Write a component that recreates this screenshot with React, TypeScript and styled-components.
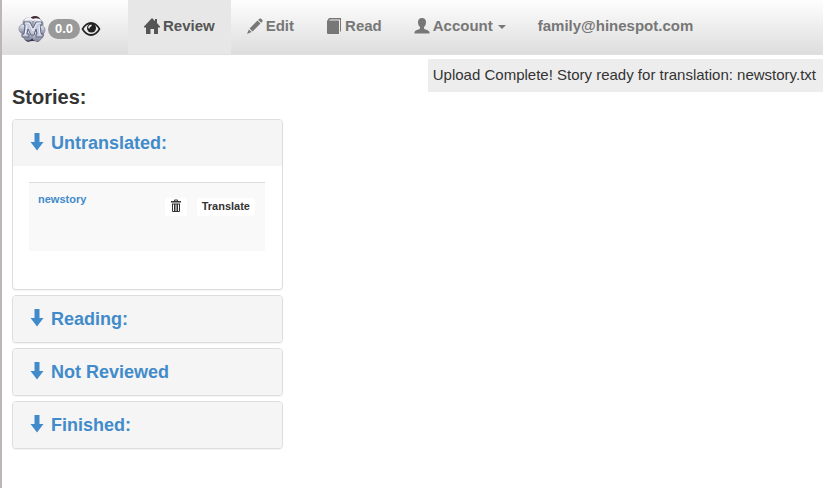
import React from 'react';
import styled, { createGlobalStyle } from 'styled-components';

const GlobalStyle = createGlobalStyle`
  *, *::before, *::after { box-sizing: border-box; }
  html, body, #root { min-height: 100vh; }
  body {
    margin: 0;
    color: #333;
    background: #fff;
    font-family: "Liberation Sans", Arial, Helvetica, sans-serif;
    font-size: 15px;
    line-height: 20px;
  }
`;

const Page = styled.div`
  min-height: 100vh;
  border-left: 2px solid #bdb6b6;
`;

const Navbar = styled.nav`
  display: flex;
  align-items: stretch;
  height: 55px;
  background: linear-gradient(to bottom, #fefefe 0%, #dddddd 100%);
  border-bottom: 1px solid #e0e0e0;
`;

const Brand = styled.a`
  display: flex;
  align-items: center;
  width: 126px;
  padding: 4px 0 0 16px;
  gap: 1px;
  color: #222;
  text-decoration: none;
`;

const Badge = styled.span`
  height: 20px;
  padding: 0 7px;
  border-radius: 10px;
  background: #999;
  color: #fff;
  font-size: 13px;
  font-weight: bold;
`;

const NavList = styled.ul`
  display: flex;
  margin: 0;
  padding: 0;
  list-style: none;
`;

const NavLink = styled.a<{ $active?: boolean }>`
  display: flex;
  align-items: center;
  height: 54px;
  padding: 0 16px 3px;
  gap: 3px;
  color: ${(p) => (p.$active ? '#555' : '#777')};
  background: ${(p) => (p.$active ? '#e7e7e7' : 'transparent')};
  font-weight: bold;
  text-decoration: none;
  white-space: nowrap;
`;

const Caret = styled.span`
  margin: 3px 0 0 2px;
  border-top: 4px solid currentColor;
  border-left: 4px solid transparent;
  border-right: 4px solid transparent;
`;

const Toast = styled.div`
  position: absolute;
  top: 59px;
  right: 0;
  padding: 6px 7px 7px 5px;
  background: #ededed;
`;

const Main = styled.main`
  padding: 30px 10px;
`;

const Sidebar = styled.section`
  width: 33%;
  min-width: 271px;
`;

const Title = styled.h1`
  margin: 0 0 10px;
  font-size: 20px;
  line-height: 24px;
`;

const PanelGroup = styled.div`
  display: flex;
  flex-direction: column;
  gap: 5px;
`;

const Panel = styled.section`
  border: 1px solid #ddd;
  border-radius: 4px;
  background: #fff;
  box-shadow: 0 1px 1px rgba(0, 0, 0, 0.05);
  overflow: hidden;
`;

const PanelHeading = styled.h2`
  margin: 0;
  padding: 13px 16px;
  background: #f5f5f5;
  font-size: 18px;
  line-height: 20px;
`;

const PanelLink = styled.a`
  display: flex;
  align-items: center;
  gap: 6px;
  color: #428bca;
  text-decoration: none;
`;

const PanelBody = styled.div`
  padding: 16px 17px 38px 16px;
`;

const StoryTable = styled.table`
  width: 100%;
  border-collapse: collapse;
  font-size: 11px;
  font-weight: bold;
  line-height: 16px;
`;

const StoryCell = styled.td`
  height: 68px;
  padding: 8px 9px;
  border-top: 1px solid #ddd;
  background: #f9f9f9;
  vertical-align: top;
`;

const StoryLink = styled.a`
  color: #428bca;
  text-decoration: none;
`;

const Actions = styled.div`
  display: flex;
  justify-content: flex-end;
  gap: 10px;
  padding: 7px 1px 0 0;
`;

const Button = styled.button`
  display: flex;
  align-items: center;
  height: 18px;
  padding: 0 5px 2px;
  border: 0;
  border-radius: 3px;
  background: #fff;
  color: #333;
  font: inherit;
  cursor: pointer;
`;

const Icon = styled.svg`
  display: block;
  flex: none;
  fill: currentColor;
`;

const Logo = () => (
  <Icon width="29" height="28" viewBox="0 0 29 28" aria-label="Home">
    <defs>
      <linearGradient id="metal" x1="0" y1="0" x2="0" y2="1">
        <stop offset="0" stopColor="#f4f5fa" />
        <stop offset="0.5" stopColor="#b4b9c9" />
        <stop offset="1" stopColor="#7c8099" />
      </linearGradient>
    </defs>
    <ellipse cx="17" cy="4" rx="5" ry="3" fill="#402936" />
    <path d="M4 18Q5 25 10 27Q15 25 20 27Q25 24 26 18Z" fill="#38364e" />
    <g fill="url(#metal)" stroke="#9698ab" strokeWidth="1">
      <circle cx="10" cy="8" r="5" />
      <circle cx="20" cy="9" r="5" />
      <circle cx="6" cy="14" r="5" />
      <circle cx="22" cy="15" r="5" />
      <circle cx="10" cy="20" r="5" />
      <circle cx="19" cy="21" r="5" />
    </g>
    <path d="M7 5Q11 2 15 5Q20 3 23 7" fill="none" stroke="#f5f5fa" strokeWidth="2" />
    <path
      d="M6 7H12L15 13L18 7H24V10H22L23 19H25V22H18V19H19L18 14L16 20H13L10 14L9 19H11V22H4V19H6L7 10H6Z"
      fill="#c3c9da"
      stroke="#61657f"
      strokeWidth="1"
    />
    <path d="M7 8H11L15 16L19 8H23M9 10L7 20M21 10L22 20" fill="none" stroke="#eef1f9" strokeWidth="1" />
  </Icon>
);

const EyeIcon = () => (
  <Icon width="20" height="16" viewBox="0 0 20 16">
    <path
      fillRule="evenodd"
      d="M.5 8Q4.500 1 10 1Q15.500 1 19.500 8Q15.500 15 10 15Q4.500 15 .5 8ZM2.500 8Q5.500 13 10 13Q14.500 13 17.500 8Q14.500 3 10 3Q5.500 3 2.500 8Z"
    />
    <circle cx="10.500" cy="7" r="4.500" />
    <path d="M10.300 3.500Q11.500 4.500 10 5.500Q8.500 6 8.300 7.800Q6.700 7.500 7.200 5.800Q8 3.800 10.300 3.500Z" fill="#eee" />
  </Icon>
);

const HomeIcon = () => (
  <Icon width="16" height="16" viewBox="0 0 16 16">
    <path d="M8 0L11 3V1H13V5L16 8.500V9.500H14V16H10V11H6.500V16H2V9.500H0V8.500Z" />
  </Icon>
);

const PencilIcon = () => (
  <Icon width="16" height="16" viewBox="0 0 16 16">
    <path d="M12.300 .8Q13.200 0 14.100 .8L15.300 2Q16 2.800 15.300 3.700L14.200 4.800L11.200 1.900ZM10.500 2.600L13.500 5.500L5.500 13.400L2.600 10.500ZM1.900 11.400L4.600 14.100L0 16Z" />
  </Icon>
);

const BookIcon = () => (
  <Icon width="16" height="16" viewBox="0 0 16 16">
    <path d="M1 3L3 0H15V13L14 14V1.500H4L3 2.500H13V16H2Q1 16 1 15Z" />
  </Icon>
);

const UserIcon = () => (
  <Icon width="16" height="16" viewBox="0 0 16 16">
    <path d="M8 0C10.800 0 12 1.700 12 4.200C12 6.500 11.100 8 10 9V10.500C10 11.500 15.500 12 15.500 14.300V15.500H.5V14.300C.5 12 6 11.500 6 10.500V9C4.900 8 4 6.500 4 4.200C4 1.700 5.200 0 8 0Z" />
  </Icon>
);

const ArrowDownIcon = () => (
  <Icon width="16" height="20" viewBox="0 1 16 20">
    <path d="M5.500 1H10.500V10H14.500L8 18.500L1.500 10H5.500Z" />
  </Icon>
);

const TrashIcon = () => (
  <Icon width="12" height="14" viewBox="0 0 12 14">
    <path
      fillRule="evenodd"
      d="M4 2V1.500Q4 .5 5 .5H7Q8 .5 8 1.500V2H11V3.500H1V2ZM5 1.500V2H7V1.500ZM2 4.500H10V12Q10 13 9 13H3Q2 13 2 12ZM3 5.500V12H4V5.500ZM5 5.500V12H5.500V5.500ZM6.500 5.500V12H7V5.500ZM8 5.500V12H9V5.500Z"
    />
  </Icon>
);

const StoryPanel = ({ title, children }: { title: string; children?: React.ReactNode }) => (
  <Panel>
    <PanelHeading>
      <PanelLink href="#">
        <ArrowDownIcon />
        {title}
      </PanelLink>
    </PanelHeading>
    {children}
  </Panel>
);

export default function App() {
  return (
    <Page>
      <GlobalStyle />
      <Navbar>
        <Brand href="#">
          <Logo />
          <Badge>0.0</Badge>
          <EyeIcon />
        </Brand>
        <NavList>
          <li><NavLink href="#" $active><HomeIcon />Review</NavLink></li>
          <li><NavLink href="#"><PencilIcon />Edit</NavLink></li>
          <li><NavLink href="#"><BookIcon />Read</NavLink></li>
          <li><NavLink href="#"><UserIcon />Account<Caret /></NavLink></li>
          <li><NavLink href="#">family@hinespot.com</NavLink></li>
        </NavList>
      </Navbar>
      <Toast role="status">Upload Complete! Story ready for translation: newstory.txt</Toast>
      <Main>
        <Sidebar>
          <Title>Stories:</Title>
          <PanelGroup>
            <StoryPanel title="Untranslated:">
              <PanelBody>
                <StoryTable>
                  <tbody>
                    <tr>
                      <StoryCell><StoryLink href="#">newstory</StoryLink></StoryCell>
                      <StoryCell>
                        <Actions>
                          <Button type="button" aria-label="Delete"><TrashIcon /></Button>
                          <Button type="button">Translate</Button>
                        </Actions>
                      </StoryCell>
                    </tr>
                  </tbody>
                </StoryTable>
              </PanelBody>
            </StoryPanel>
            <StoryPanel title="Reading:" />
            <StoryPanel title="Not Reviewed" />
            <StoryPanel title="Finished:" />
          </PanelGroup>
        </Sidebar>
      </Main>
    </Page>
  );
}
